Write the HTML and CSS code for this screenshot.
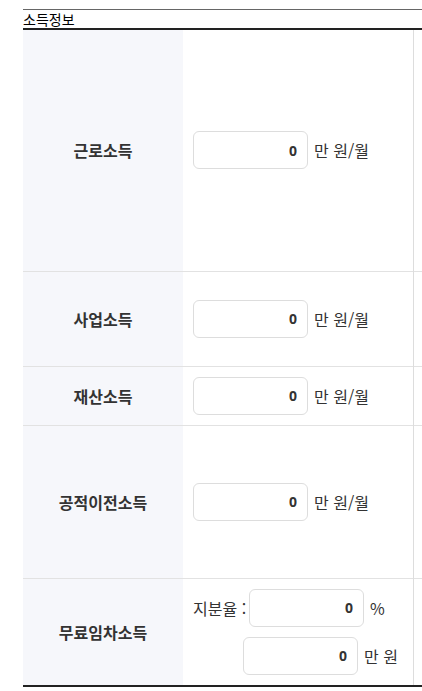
FILE: index.html
```html
<!DOCTYPE html>
<html lang="ko">
<head>
    <meta charset="UTF-8">
    <meta name="viewport" content="width=device-width, initial-scale=1.0">
    <title>소득정보</title>
    <link rel="stylesheet" href="styles.css">
</head>
<body>
    <div class="section">
        <h3 class="section-title">소득정보</h3>
        <table class="info-table">
            <colgroup>
                <col class="col-label">
                <col class="col-value">
                <col>
            </colgroup>
            <tr class="row-1">
                <th>근로소득</th>
                <td>
                    <div class="field"><input type="text" value="0"><span class="unit">만 원/월</span></div>
                </td>
                <td></td>
            </tr>
            <tr class="row-2">
                <th>사업소득</th>
                <td>
                    <div class="field"><input type="text" value="0"><span class="unit">만 원/월</span></div>
                </td>
                <td></td>
            </tr>
            <tr class="row-3">
                <th>재산소득</th>
                <td>
                    <div class="field"><input type="text" value="0"><span class="unit">만 원/월</span></div>
                </td>
                <td></td>
            </tr>
            <tr class="row-4">
                <th>공적이전소득</th>
                <td>
                    <div class="field"><input type="text" value="0"><span class="unit">만 원/월</span></div>
                </td>
                <td></td>
            </tr>
            <tr class="row-5">
                <th>무료임차소득</th>
                <td>
                    <div class="field"><span class="prefix">지분율 :</span><input type="text" value="0"><span class="unit">%</span></div>
                    <div class="field field-indent"><input type="text" value="0"><span class="unit">만 원</span></div>
                </td>
                <td></td>
            </tr>
        </table>
    </div>
</body>
</html>
```

FILE: styles.css
```css
body {
    margin: 0;
    font-family: "Noto Sans CJK KR", "Noto Sans", sans-serif;
    color: #333;
}
.section {
    padding: 9px 0 0 23px;
}
.section-title {
    margin: 0;
    border-top: 1px solid #666;
    font-size: 14px;
    font-weight: normal;
    color: #000;
    line-height: 18px;
    height: 18px;
}
.info-table {
    width: 100%;
    border-collapse: collapse;
    border-top: 2px solid #222;
    border-bottom: 2px solid #222;
}
.col-label {
    width: 160px;
}
.col-value {
    width: 230px;
}
.info-table th {
    background-color: #f6f7fb;
    font-size: 16px;
    font-weight: bold;
    color: #333;
    text-align: center;
    padding: 0;
}
.info-table td {
    padding: 0 0 0 10px;
    border-right: 1px solid #ddd;
}
.info-table td:last-child {
    border-right: none;
    padding: 0;
}
.info-table tr + tr th,
.info-table tr + tr td {
    border-top: 1px solid #e2e2e2;
}
.row-1 { height: 242px; }
.row-2 { height: 95px; }
.row-3 { height: 59px; }
.row-4 { height: 153px; }
.row-5 th, .row-5 td:nth-child(2) {
    padding-top: 10px;
    padding-bottom: 10px;
}
.field {
    display: flex;
    align-items: center;
    font-size: 16px;
}
.field + .field {
    margin-top: 10px;
}
.field-indent {
    margin-left: 50px;
}
.field input {
    box-sizing: border-box;
    width: 115px;
    height: 38px;
    border: 1px solid #ddd;
    border-radius: 6px;
    padding: 0 10px;
    text-align: right;
    font-family: "Noto Sans", sans-serif;
    font-size: 14px;
    font-weight: bold;
    color: #333;
    background: #fff;
}
.unit {
    margin-left: 6px;
}
.prefix {
    margin-right: 3px;
}
```
